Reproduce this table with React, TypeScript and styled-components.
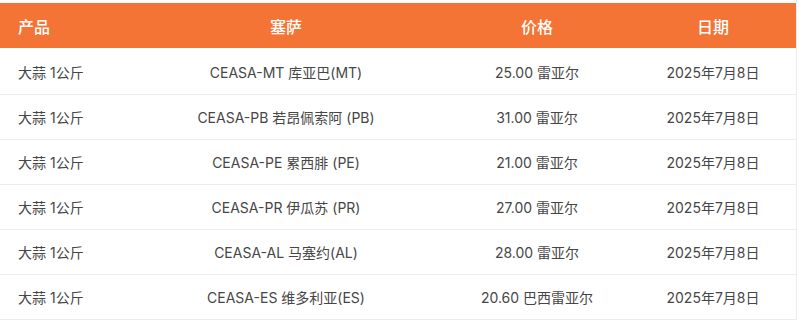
import React from "react";
import styled, { createGlobalStyle } from "styled-components";

const GlobalStyle = createGlobalStyle`
  html, body { margin: 0; padding: 0; background: #ffffff; }
  body { font-family: Inter, "Noto Sans CJK SC", sans-serif; }
`;

const Wrapper = styled.div`
  width: 796px;
  padding-top: 3px;
  border-right: 1px solid #ececec;
`;

const Table = styled.table`
  width: 796px;
  border-collapse: collapse;
  table-layout: fixed;
  font-family: Inter, "Noto Sans CJK SC", sans-serif;
`;

const HeadCell = styled.th<{ $align?: string; $w: number }>`
  background: #f37435;
  color: #ffffff;
  font-size: 16px;
  font-weight: 500;
  height: 45px;
  padding: 0 18px;
  box-sizing: border-box;
  width: ${(p) => p.$w}px;
  text-align: ${(p) => p.$align || "center"};
`;

const Row = styled.tr`
  border-bottom: 1px solid #ececec;
`;

const Cell = styled.td<{ $align?: string; $first?: boolean }>`
  height: ${(p) => (p.$first ? 46 : 45)}px;
  padding: ${(p) => (p.$first ? "2px 18px 0" : "0 18px")};
  box-sizing: border-box;
  font-size: 14px;
  color: #464646;
  text-align: ${(p) => p.$align || "center"};
  white-space: nowrap;
`;

const rows = [
  ["大蒜 1公斤", "CEASA-MT 库亚巴(MT)", "25.00 雷亚尔", "2025年7月8日"],
  ["大蒜 1公斤", "CEASA-PB 若昂佩索阿 (PB)", "31.00 雷亚尔", "2025年7月8日"],
  ["大蒜 1公斤", "CEASA-PE 累西腓 (PE)", "21.00 雷亚尔", "2025年7月8日"],
  ["大蒜 1公斤", "CEASA-PR 伊瓜苏 (PR)", "27.00 雷亚尔", "2025年7月8日"],
  ["大蒜 1公斤", "CEASA-AL 马塞约(AL)", "28.00 雷亚尔", "2025年7月8日"],
  ["大蒜 1公斤", "CEASA-ES 维多利亚(ES)", "20.60 巴西雷亚尔", "2025年7月8日"],
];

export default function App() {
  return (
    <>
      <GlobalStyle />
      <Wrapper>
        <Table>
          <thead>
            <tr>
              <HeadCell $align="left" $w={128}>产品</HeadCell>
              <HeadCell $w={316}>塞萨</HeadCell>
              <HeadCell $w={186}>价格</HeadCell>
              <HeadCell $w={166}>日期</HeadCell>
            </tr>
          </thead>
          <tbody>
            {rows.map((r, i) => (
              <Row key={i}>
                <Cell $align="left" $first={i === 0}>{r[0]}</Cell>
                <Cell $first={i === 0}>{r[1]}</Cell>
                <Cell $first={i === 0}>{r[2]}</Cell>
                <Cell $first={i === 0}>{r[3]}</Cell>
              </Row>
            ))}
          </tbody>
        </Table>
      </Wrapper>
    </>
  );
}
